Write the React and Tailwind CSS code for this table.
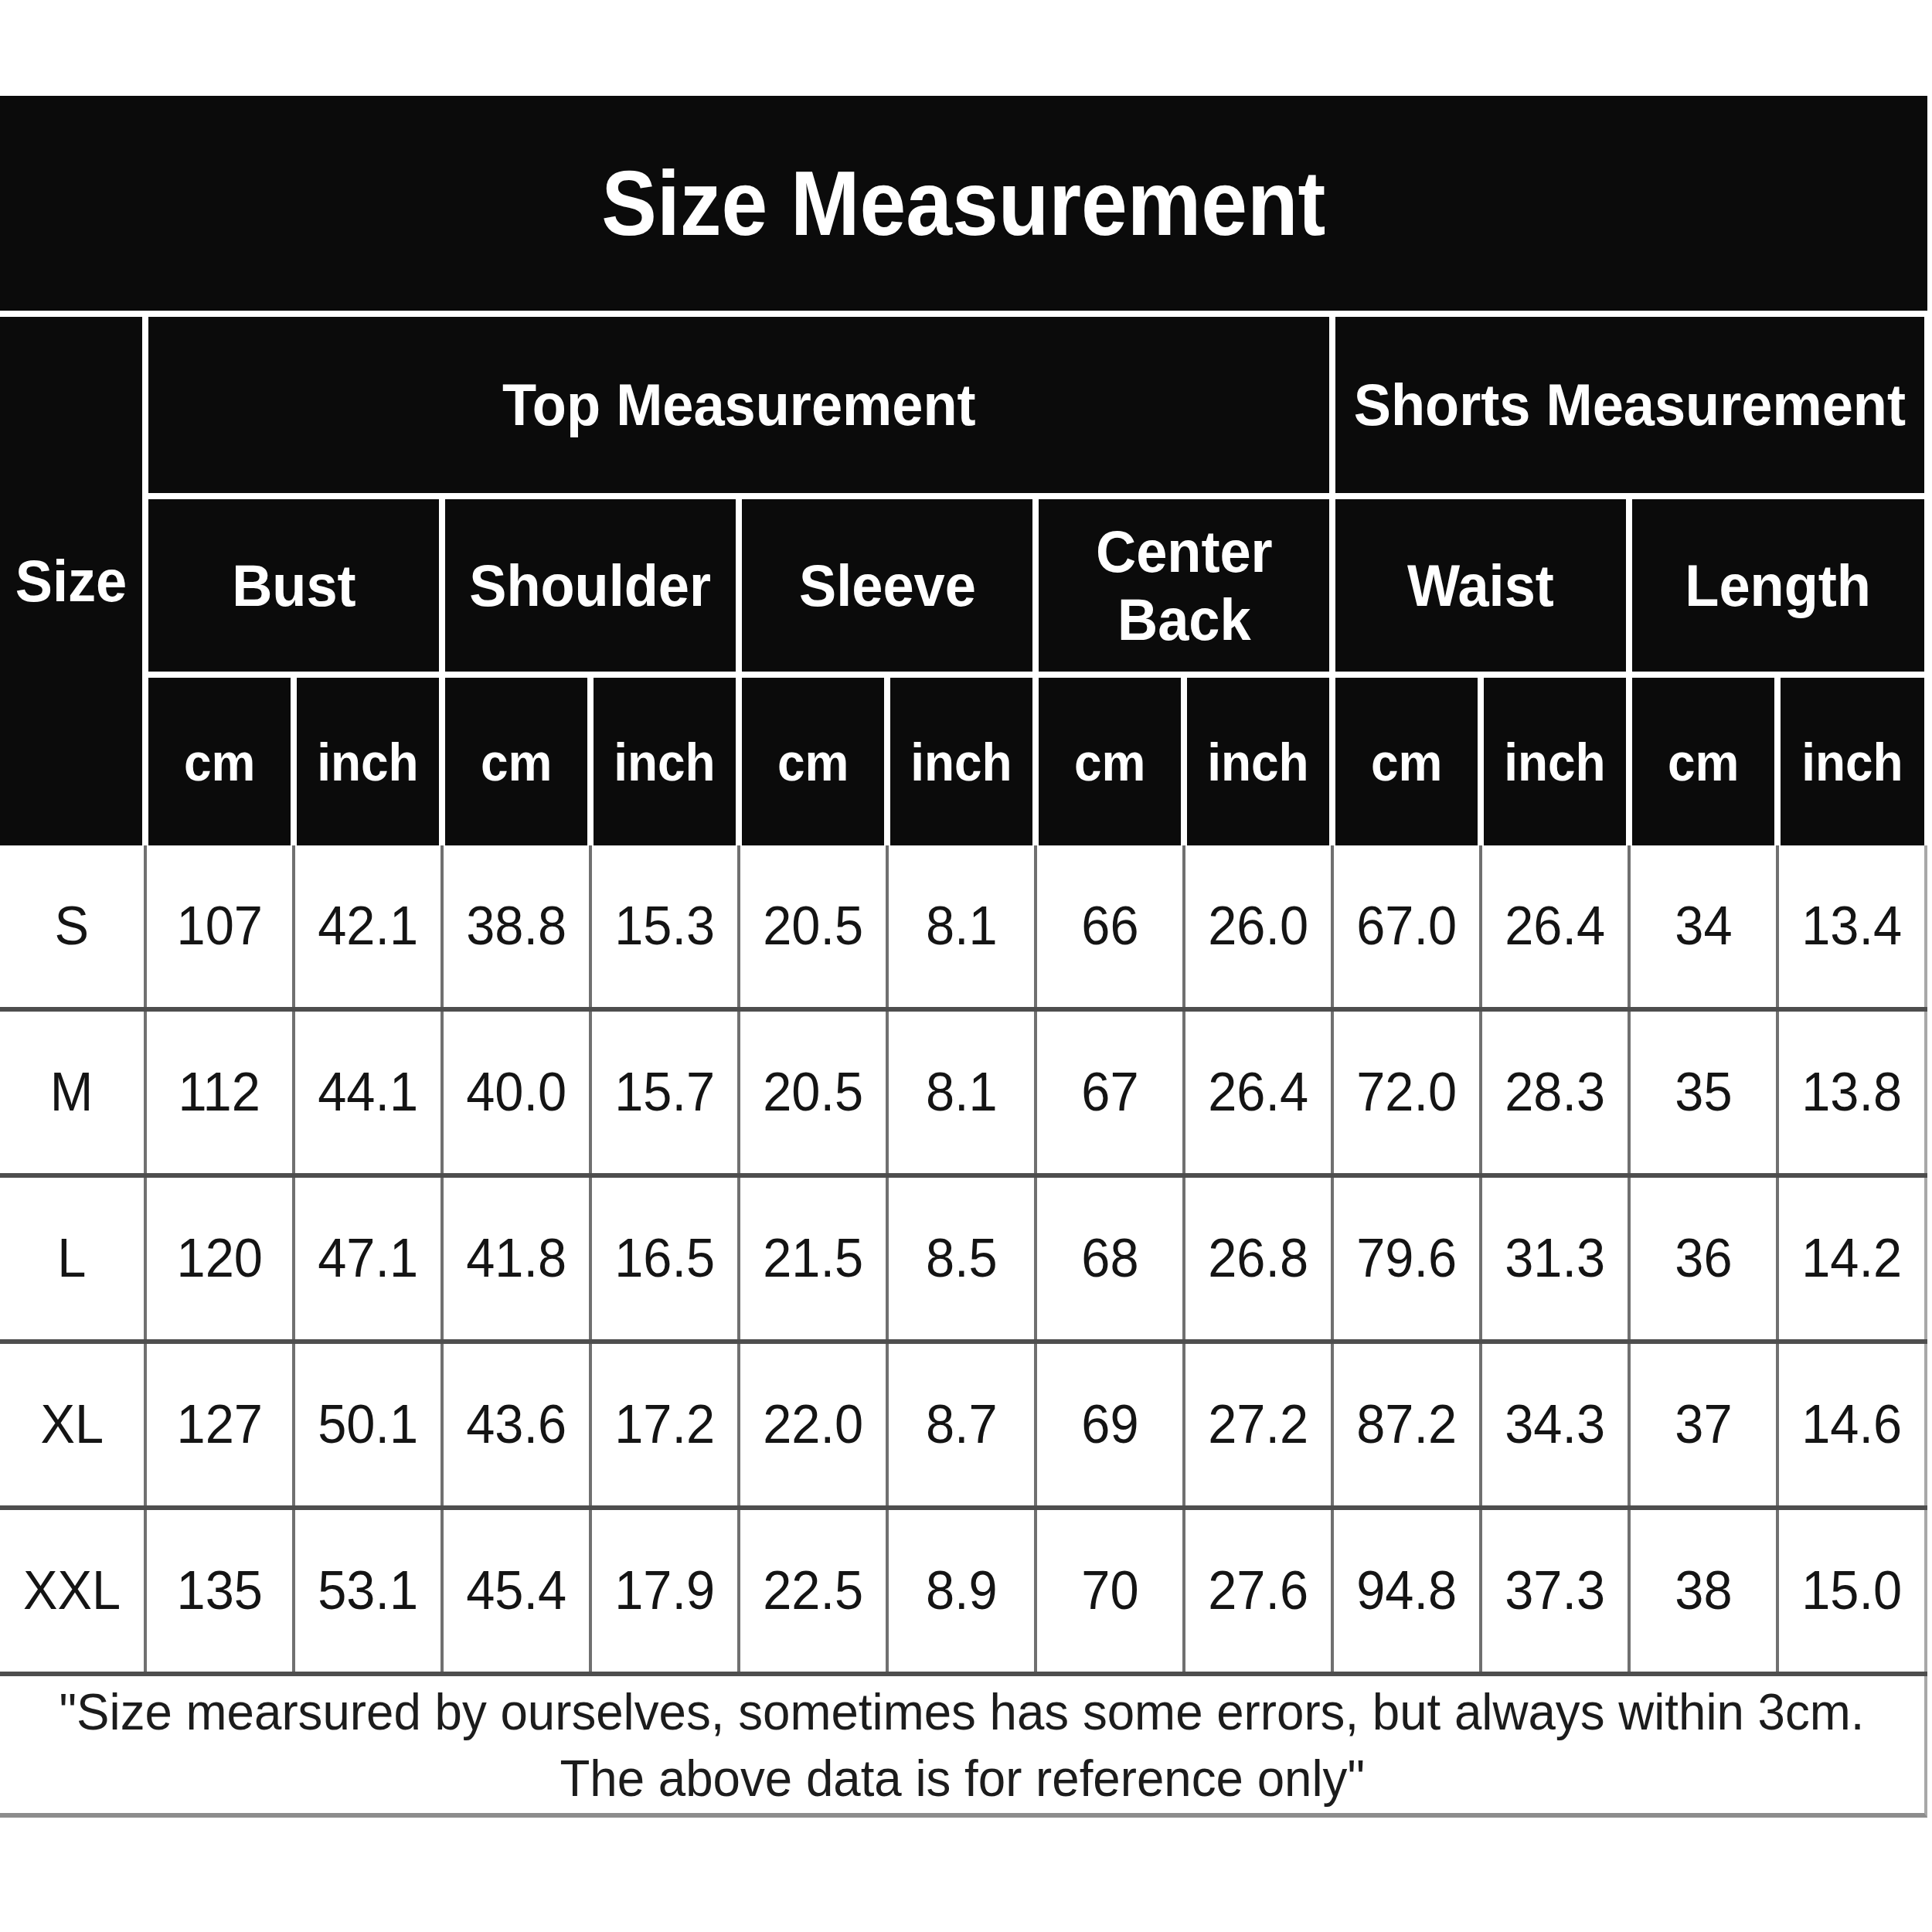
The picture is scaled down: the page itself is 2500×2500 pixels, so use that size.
const SUBS = ["Bust", "Shoulder", "Sleeve", "Center Back", "Waist", "Length"];

const ROWS = [
  ["S", "107", "42.1", "38.8", "15.3", "20.5", "8.1", "66", "26.0", "67.0", "26.4", "34", "13.4"],
  ["M", "112", "44.1", "40.0", "15.7", "20.5", "8.1", "67", "26.4", "72.0", "28.3", "35", "13.8"],
  ["L", "120", "47.1", "41.8", "16.5", "21.5", "8.5", "68", "26.8", "79.6", "31.3", "36", "14.2"],
  ["XL", "127", "50.1", "43.6", "17.2", "22.0", "8.7", "69", "27.2", "87.2", "34.3", "37", "14.6"],
  ["XXL", "135", "53.1", "45.4", "17.9", "22.5", "8.9", "70", "27.6", "94.8", "37.3", "38", "15.0"],
];

function HeadCell({ className = "", children }) {
  return (
    <div className={`bg-[#0b0b0b] flex items-center justify-center text-center text-white font-bold ${className}`}>
      {children}
    </div>
  );
}

export default function App() {
  return (
    <div className="w-[2500px] h-[2500px] bg-white pt-[124px] font-['Liberation_Sans',Arial,sans-serif]">
      <div className="w-[2494px]">
        <div className="h-[278px] bg-[#0b0b0b] flex items-center justify-center">
          <span className="inline-block scale-x-[0.91] text-white font-bold text-[118px] leading-none">
            Size Measurement
          </span>
        </div>

        <div className="grid grid-cols-[184px_repeat(11,184px)_186px] grid-rows-[228px_223px_217px] gap-[8px] pt-[8px] bg-white">
          <HeadCell className="row-span-3 text-[76px]">
            <span className="inline-block scale-x-[0.95]">Size</span>
          </HeadCell>
          <HeadCell className="col-span-8 text-[76px]">
            <span className="inline-block scale-x-[0.95]">Top Measurement</span>
          </HeadCell>
          <HeadCell className="col-span-4 text-[76px]">
            <span className="inline-block scale-x-[0.95] whitespace-nowrap">Shorts Measurement</span>
          </HeadCell>
          {SUBS.map((s) => (
            <HeadCell key={s} className="col-span-2 text-[76px] leading-[88px]">
              <span className="inline-block scale-x-[0.95]">
                {s === "Center Back" ? (
                  <>
                    Center
                    <br />
                    Back
                  </>
                ) : (
                  s
                )}
              </span>
            </HeadCell>
          ))}
          {SUBS.flatMap((s) => [
            <HeadCell key={s + "cm"} className="text-[68px]">
              <span className="inline-block scale-x-[0.94]">cm</span>
            </HeadCell>,
            <HeadCell key={s + "in"} className="text-[68px]">
              <span className="inline-block scale-x-[0.94]">inch</span>
            </HeadCell>,
          ])}
        </div>

        <div className="flex flex-col">
          {ROWS.map((row) => (
            <div key={row[0]} className="flex h-[215px] border-b-[6px] border-[#4e4e4e]">
              {row.map((v, i) => (
                <div
                  key={i}
                  className={
                    i === 0
                      ? "w-[186px] flex items-center justify-center text-[71px] text-[#141414]"
                      : i === 12
                      ? "w-[196px] border-l-[4px] border-r-[4px] border-l-[#707070] border-r-[#a8a8a8] flex items-center justify-center text-[71px] text-[#141414]"
                      : "w-[192px] border-l-[4px] border-[#707070] flex items-center justify-center text-[71px] text-[#141414]"
                  }
                >
                  <span className="inline-block scale-x-[0.94]">{v}</span>
                </div>
              ))}
            </div>
          ))}
          <div className="h-[183px] border-b-[6px] border-r-[4px] border-b-[#8c8c8c] border-r-[#a8a8a8] flex flex-col items-center justify-center text-[67px] leading-[86px] text-[#1c1c1c]">
            <span className="inline-block scale-x-[0.95] whitespace-nowrap">
              "Size mearsured by ourselves, sometimes has some errors, but always within 3cm.
            </span>
            <span className="inline-block scale-x-[0.95] whitespace-nowrap">The above data is for reference only"</span>
          </div>
        </div>
      </div>
    </div>
  );
}
